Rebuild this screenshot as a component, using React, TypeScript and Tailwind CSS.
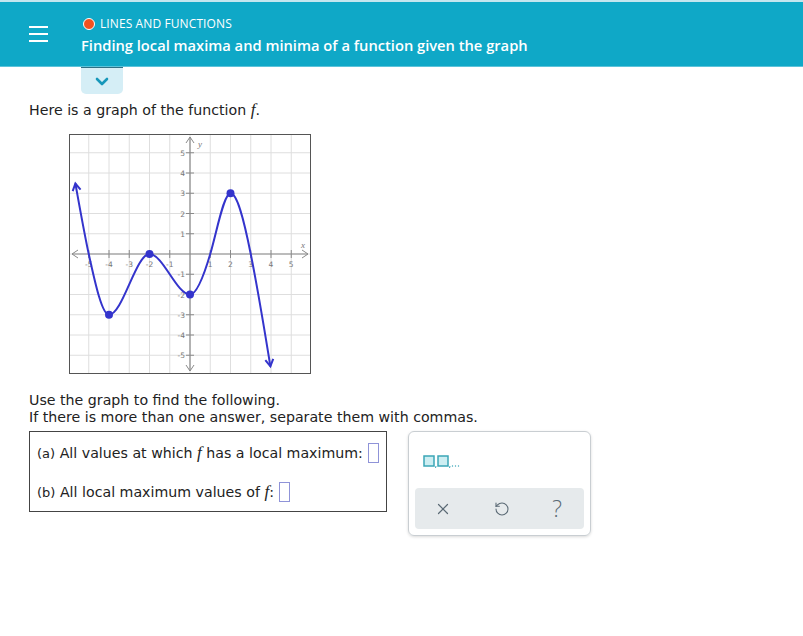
import React from 'react';
import { X, RotateCcw } from 'lucide-react';

// graph geometry (svg coords)
const U = 20.25;
const OX = 120;
const OY = 119;
const W = 240;
const H = 238;
const BLUE = '#3434cc';

const sx = (x: number) => OX + x * U;
const sy = (y: number) => OY - y * U;

// knots: x, y, slope
const knots: [number, number, number][] = [
  [-5.66, 3.48, -5.5],
  [-5, 0, -4.6],
  [-4, -3, 0],
  [-2, 0, 0],
  [0, -2, 0],
  [1, 0, 3.4],
  [2, 3, 0],
  [3, 0, -5],
  [3.97, -5.55, -6.2],
];

function curvePath() {
  let d = `M${sx(knots[0][0])},${sy(knots[0][1])}`;
  for (let i = 0; i < knots.length - 1; i++) {
    const [x0, y0, m0] = knots[i];
    const [x1, y1, m1] = knots[i + 1];
    const h = (x1 - x0) / 3;
    d += ` C${sx(x0 + h)},${sy(y0 + h * m0)} ${sx(x1 - h)},${sy(y1 - h * m1)} ${sx(x1)},${sy(y1)}`;
  }
  return d;
}

function arrowHead(tx: number, ty: number, dx: number, dy: number, len = 8) {
  const l = Math.hypot(dx, dy);
  const ux = dx / l;
  const uy = dy / l;
  const a = Math.PI / 6;
  const p = (ang: number) => {
    const bx = -ux * Math.cos(ang) + uy * Math.sin(ang);
    const by = -uy * Math.cos(ang) - ux * Math.sin(ang);
    return `${tx + bx * len},${ty + by * len}`;
  };
  return `M${p(a)} L${tx},${ty} L${p(-a)}`;
}

function Graph() {
  const ints = [-6, -5, -4, -3, -2, -1, 0, 1, 2, 3, 4, 5, 6];
  const ticks = [-5, -4, -3, -2, -1, 1, 2, 3, 4, 5];
  const start = knots[0];
  const end = knots[knots.length - 1];
  return (
    <div className="w-[242px] h-[240px] border border-[#555] bg-white">
      <svg width={W} height={H} viewBox={`0 0 ${W} ${H}`} style={{ fontFamily: '"DejaVu Sans", sans-serif' }}>
        {/* grid */}
        {ints.map((i) => (
          <React.Fragment key={i}>
            <line x1={sx(i)} y1={0} x2={sx(i)} y2={H} stroke="#dedede" strokeWidth="1" />
            <line x1={0} y1={sy(i)} x2={W} y2={sy(i)} stroke="#dedede" strokeWidth="1" />
          </React.Fragment>
        ))}
        {/* axes */}
        <line x1={2} y1={OY} x2={W - 2} y2={OY} stroke="#8a8a8a" strokeWidth="1.2" />
        <line x1={OX} y1={2} x2={OX} y2={H - 2} stroke="#8a8a8a" strokeWidth="1.2" />
        <path d={`M8,${OY - 4} L2,${OY} L8,${OY + 4}`} fill="none" stroke="#8a8a8a" strokeWidth="1" />
        <path d={`M${W - 8},${OY - 4} L${W - 2},${OY} L${W - 8},${OY + 4}`} fill="none" stroke="#8a8a8a" strokeWidth="1" />
        <path d={`M${OX - 4},8 L${OX},2 L${OX + 4},8`} fill="none" stroke="#8a8a8a" strokeWidth="1" />
        <path d={`M${OX - 4},${H - 8} L${OX},${H - 2} L${OX + 4},${H - 8}`} fill="none" stroke="#8a8a8a" strokeWidth="1" />
        {ticks.map((t) => (
          <React.Fragment key={t}>
            <line x1={sx(t)} y1={OY - 4} x2={sx(t)} y2={OY + 4} stroke="#8a8a8a" strokeWidth="1" />
            <line x1={OX - 4} y1={sy(t)} x2={OX + 4} y2={sy(t)} stroke="#8a8a8a" strokeWidth="1" />
            <text x={sx(t)} y={OY + 13} fontSize="7.5" fill="#777" textAnchor="middle">
              {t}
            </text>
            <text x={OX - 5} y={sy(t) + 3} fontSize="7.5" fill="#777" textAnchor="end">
              {t}
            </text>
          </React.Fragment>
        ))}
        <text x={OX + 8} y={12} fontSize="9" fill="#777" fontStyle="italic" style={{ fontFamily: '"Liberation Serif", serif' }}>
          y
        </text>
        <text x={W - 9} y={OY - 6} fontSize="9" fill="#777" fontStyle="italic" style={{ fontFamily: '"Liberation Serif", serif' }}>
          x
        </text>
        {/* curve */}
        <path d={curvePath()} fill="none" stroke={BLUE} strokeWidth="2" />
        <path
          d={arrowHead(sx(start[0]), sy(start[1]), -1, start[2])}
          fill="none"
          stroke={BLUE}
          strokeWidth="2"
        />
        <path d={arrowHead(sx(end[0]), sy(end[1]), 1, -end[2])} fill="none" stroke={BLUE} strokeWidth="2" />
        {[
          [-4, -3],
          [-2, 0],
          [0, -2],
          [2, 3],
        ].map(([x, y]) => (
          <circle key={x} cx={sx(x)} cy={sy(y)} r="4" fill={BLUE} />
        ))}
      </svg>
    </div>
  );
}

const F = () => (
  <span className="italic text-[17px] leading-none" style={{ fontFamily: '"Liberation Serif", serif' }}>
    f
  </span>
);

function AnswerBox() {
  return <span className="inline-block w-[11px] h-[20px] border border-[#8f93d8] align-middle ml-[5px] -mt-[2px]" />;
}

export default function App() {
  return (
    <div className="w-[803px] h-[636px] bg-white overflow-hidden" style={{ fontFamily: '"DejaVu Sans", Verdana, sans-serif' }}>
      {/* header */}
      <div className="h-[67px] border-t-2 border-[#c3e6ef] bg-[#0fa8c7] border-b border-b-[#5cc3da] flex items-center">
        <div className="w-[81px] flex justify-center pr-[4px]">
          <div className="flex flex-col gap-[5px]">
            <div className="w-[19px] h-[2px] bg-white" />
            <div className="w-[19px] h-[2px] bg-white" />
            <div className="w-[19px] h-[2px] bg-white" />
          </div>
        </div>
        <div className="flex flex-col pt-[3px]" style={{ fontFamily: '"Open Sans", sans-serif' }}>
          <div className="flex items-center gap-[5px] pl-[2px]">
            <span className="w-[12px] h-[12px] rounded-full bg-[#f2511f] border-[1.5px] border-white" />
            <span className="text-[12px] text-white leading-[16px] tracking-[0.1px]">LINES AND FUNCTIONS</span>
          </div>
          <div className="text-[14.7px] text-white font-semibold leading-[22px] mt-[2px]">
            Finding local maxima and minima of a function given the graph
          </div>
        </div>
      </div>

      {/* tab */}
      <div className="ml-[81px] w-[42px] h-[27px] bg-[#d5eef6] rounded-b-[5px] border-t border-[#2e6f83] flex items-center justify-center">
        <svg width="14" height="9" viewBox="0 0 14 9">
          <path d="M2,2 L7,7 L12,2" fill="none" stroke="#1797ba" strokeWidth="2.6" strokeLinecap="round" strokeLinejoin="round" />
        </svg>
      </div>

      <div className="pl-[29px] text-[14.2px] text-[#222]">
        <div className="leading-[20px] mt-[6px] whitespace-nowrap">
          Here is a graph of the function <F />.
        </div>

        <div className="ml-[40px] mt-[14px]">
          <Graph />
        </div>

        <div className="leading-[17px] mt-[18px] whitespace-nowrap">
          <div>Use the graph to find the following.</div>
          <div>If there is more than one answer, separate them with commas.</div>
        </div>

        <div className="flex items-start gap-[21px] mt-[5px]">
          <div className="w-[358px] h-[81px] border border-[#444] px-[7px] whitespace-nowrap">
            <div className="h-[20px] leading-[20px] mt-[11px]">
              <span className="text-[13px]">(a)</span> All values at which <F /> has a local maximum:
              <AnswerBox />
            </div>
            <div className="h-[20px] leading-[20px] mt-[19px]">
              <span className="text-[13px]">(b)</span> All local maximum values of <F />:
              <AnswerBox />
            </div>
          </div>

          <div className="w-[183px] h-[105px] border border-[#c9ced2] rounded-[6px] shadow-[0_1px_3px_rgba(0,0,0,0.15)] flex flex-col px-[6px] pb-[6px]">
            <div className="h-[56px] pl-[8px] flex items-center pt-[2px]">
              <svg width="40" height="14" viewBox="0 0 40 14">
                <rect x="1" y="2" width="10" height="10" fill="#cdeef2" stroke="#3ba6b7" strokeWidth="1.5" />
                <rect x="15" y="2" width="10" height="10" fill="#cdeef2" stroke="#3ba6b7" strokeWidth="1.5" />
                <path d="M13,12 L12.5,14" stroke="#3ba6b7" strokeWidth="1" />
                <path d="M27,12 L26.5,14" stroke="#3ba6b7" strokeWidth="1" />
                <circle cx="29.5" cy="12" r="0.7" fill="#3ba6b7" />
                <circle cx="32.5" cy="12" r="0.7" fill="#3ba6b7" />
                <circle cx="35.5" cy="12" r="0.7" fill="#3ba6b7" />
              </svg>
            </div>
            <div className="flex-1 bg-[#e6eaec] rounded-[4px] flex items-center justify-between pl-[19px] pr-[22px] text-[#5b6a75]">
              <X size={18} strokeWidth={1.6} />
              <RotateCcw size={16} strokeWidth={1.6} />
              <span className="text-[23px] leading-none" style={{ fontFamily: '"Open Sans", sans-serif', fontWeight: 300 }}>
                ?
              </span>
            </div>
          </div>
        </div>
      </div>
    </div>
  );
}
